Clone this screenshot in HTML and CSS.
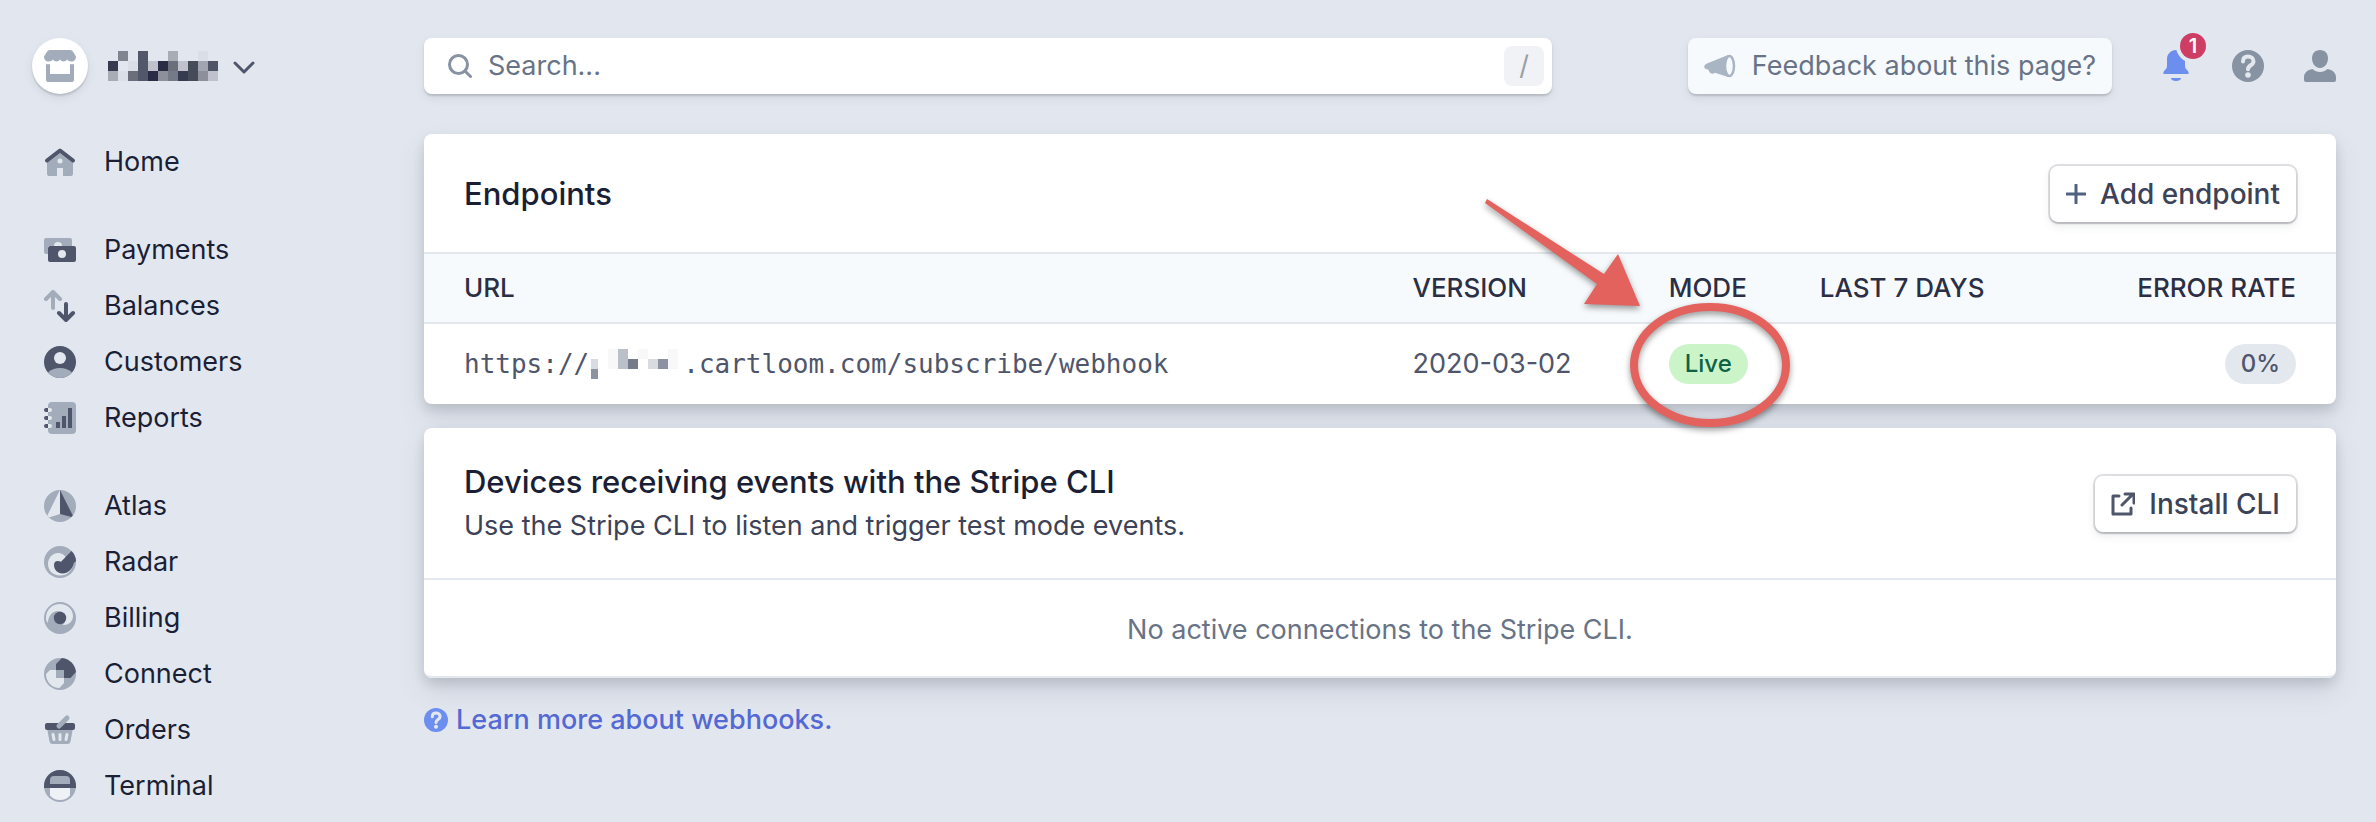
FILE: index.html
```html
<!DOCTYPE html>
<html lang="en">
<head>
    <meta charset="UTF-8">
    <meta name="viewport" content="width=device-width, initial-scale=1.0">
    <title>Webhooks - Dashboard</title>
    <link rel="stylesheet" href="styles.css">
</head>
<body>
    <aside class="sidebar">
        <button type="button" class="account" aria-label="Switch account">
            <span class="account-logo">
                <svg width="32" height="32" viewBox="0 0 32 32" fill="#a3acba">
                    <path d="M6 0h20c1.500 0 2.500.8 3.200 2L32 6.500c0 3-2 5-4.500 5-2.200 0-3.500-.8-4.300-2-1 1.200-2.200 2-3.700 2-1.500 0-2.700-.8-3.500-2-.8 1.200-2 2-3.500 2-1.500 0-2.700-.8-3.700-2-.8 1.200-2.100 2-4.300 2-2.500 0-4.500-2-4.500-5L2.800 2C3.500.8 4.500 0 6 0z"/>
                    <path d="M2 14c1.500.4 3 .3 4 0v10h20V14c1.300.4 2.700.4 4 0v16a2 2 0 0 1-2 2H4a2 2 0 0 1-2-2z"/>
                </svg>
            </span>
            <svg class="account-name" width="110" height="30" viewBox="0 0 11 3" shape-rendering="crispEdges">
                <path fill="#808590" d="M1 0h1v1H1z"/>
                <path fill="#52586a" d="M3 0h1v3H3z"/>
                <path fill="#a8acb5" d="M6 0h1v1H6zM0 2h1v1H0z"/>
                <path fill="#dadee6" d="M9 0h1v1H9zM2 1h1v1H2zM1 2h1v1H1z"/>
                <path fill="#373b50" d="M0 1h1v1H0zM7 2h1v1H7z"/>
                <path fill="#bfc2cd" d="M4 1h1v1H4zM7 1h1v1H7zM10 2h1v1h-1z"/>
                <path fill="#2a2c45" d="M5 1h1v1H5zM4 2h1v1H4z"/>
                <path fill="#6b6f7c" d="M6 1h1v1H6zM2 2h1v1H2z"/>
                <path fill="#464b5a" d="M8 1h1v1H8zM8 2h1v1H8z"/>
                <path fill="#a1a5b1" d="M9 1h1v1H9z"/>
                <path fill="#50556a" d="M10 1h1v1h-1z"/>
                <path fill="#8d909a" d="M5 2h1v1H5zM9 2h1v1H9z"/>
                <path fill="#757a88" d="M6 2h1v1H6z"/>
            </svg>
            <svg width="24" height="16" viewBox="0 0 24 16" fill="none" stroke="#4f566b" stroke-width="3" stroke-linecap="round" stroke-linejoin="round">
                <path d="M3 5l9 9 9-9"/>
            </svg>
        </button>

        <nav class="nav">
            <ul class="nav-group">
                <li><a href="#" class="nav-link">
                    <svg class="nav-icon" viewBox="0 0 32 32">
                        <path fill="#a3acba" fill-rule="evenodd" d="M3 14L16 4l13 10v14a2 2 0 0 1-2 2h-8v-8h-6v8H5a2 2 0 0 1-2-2zM16 12.500a2.500 2.500 0 1 0 0 5 2.500 2.500 0 0 0 0-5z"/>
                        <path fill="none" stroke="#4f566b" stroke-width="4" stroke-linecap="round" stroke-linejoin="round" d="M3 14.500L16 4.500l13 10"/>
                    </svg>
                    Home
                </a></li>
            </ul>
            <ul class="nav-group">
                <li><a href="#" class="nav-link">
                    <svg class="nav-icon" viewBox="0 0 32 32">
                        <path fill="#a3acba" d="M2 4h24a2 2 0 0 1 2 2v6H4v8H2a2 2 0 0 1-2-2V6a2 2 0 0 1 2-2z"/>
                        <circle cx="14" cy="12" r="4" fill="#e3e8ee"/>
                        <path fill="#4f566b" fill-rule="evenodd" d="M6 12h24a2 2 0 0 1 2 2v12a2 2 0 0 1-2 2H6a2 2 0 0 1-2-2V14a2 2 0 0 1 2-2zM18 16a4 4 0 1 0 0 8 4 4 0 0 0 0-8z"/>
                    </svg>
                    Payments
                </a></li>
                <li><a href="#" class="nav-link">
                    <svg class="nav-icon" viewBox="0 0 32 32" fill="none" stroke-width="4" stroke-linecap="round" stroke-linejoin="round">
                        <path stroke="#a3acba" d="M9 18V3M2 9l7-7 7 7"/>
                        <path stroke="#4f566b" d="M22 14v15M15 23l7 7 7-7"/>
                    </svg>
                    Balances
                </a></li>
                <li><a href="#" class="nav-link">
                    <svg class="nav-icon" viewBox="0 0 32 32">
                        <circle cx="16" cy="16" r="16" fill="#4f566b"/>
                        <circle cx="16" cy="12" r="6" fill="#e3e8ee"/>
                        <path fill="#a3acba" d="M4 26.500C7 23.500 11 22 16 22s9 1.500 12 4.500C25 30 21 32 16 32S7 30 4 26.500z"/>
                    </svg>
                    Customers
                </a></li>
                <li><a href="#" class="nav-link">
                    <svg class="nav-icon" viewBox="0 0 32 32">
                        <rect x="4" width="28" height="32" rx="4" fill="#a3acba"/>
                        <path fill="none" stroke="#e3e8ee" stroke-width="4" stroke-linecap="round" d="M4 8h2M4 16h2M4 24h2"/>
                        <path fill="#4f566b" d="M4 6v4H2a2 2 0 0 1 0-4zM4 14v4H2a2 2 0 0 1 0-4zM4 22v4H2a2 2 0 0 1 0-4zM12 20h4v6h-4zM18 14h4v12h-4zM24 6h4v20h-4z"/>
                    </svg>
                    Reports
                </a></li>
            </ul>
            <ul class="nav-group">
                <li><a href="#" class="nav-link">
                    <svg class="nav-icon" viewBox="0 0 32 32">
                        <circle cx="16" cy="16" r="16" fill="#a3acba"/>
                        <path fill="#e3e8ee" d="M16 0v24L5 27.500 3.300 25.500z"/>
                        <path fill="#4f566b" d="M16 0l12.800 25.500-1.300 1.500L16 24z"/>
                    </svg>
                    Atlas
                </a></li>
                <li><a href="#" class="nav-link">
                    <svg class="nav-icon" viewBox="0 0 32 32">
                        <circle cx="16" cy="16" r="16" fill="#a3acba"/>
                        <path fill="#e3e8ee" d="M21 10C19 8 17 7 14 7 8.500 7 4 12 4 18c0 6.500 5 11.500 12 11.500 7 0 12-4.500 14-12.500l-8-2z"/>
                        <path fill="#4f566b" d="M27.500 5C30.500 8 32 11.500 32 15.500c-1 .2-1.600.5-2 1.500-1.500 6-6 10.500-11.500 10.500-5 0-8.500-4-8.500-8.500 0-2.500 1.500-4 3.500-4 1.300 0 2.500.5 3.500.8z"/>
                    </svg>
                    Radar
                </a></li>
                <li><a href="#" class="nav-link">
                    <svg class="nav-icon" viewBox="0 0 32 32">
                        <circle cx="16" cy="16" r="16" fill="#a3acba"/>
                        <path fill="#e3e8ee" d="M2 16C2 8 8 2 16 2c7 0 13 5 13 12 0 5-4 9-9 9-3 0 2-2 2-7 0-4-3-7-8-7-6 0-10 5-10 12C2.500 19.500 2 18 2 16z"/>
                        <circle cx="16" cy="16" r="6.200" fill="#4f566b"/>
                    </svg>
                    Billing
                </a></li>
                <li><a href="#" class="nav-link">
                    <svg class="nav-icon" viewBox="0 0 32 32">
                        <circle cx="16" cy="16" r="16" fill="#a3acba"/>
                        <path fill="#4f566b" d="M18 0c8 1 13 6.500 14 14l-5.500 6H12V6z"/>
                        <path fill="#e3e8ee" d="M6 12h14v13l-4.500 5C8 30 2 24 2 16z"/>
                        <path fill="#a3acba" d="M12 12h8v8h-8z"/>
                    </svg>
                    Connect
                </a></li>
                <li><a href="#" class="nav-link">
                    <svg class="nav-icon" viewBox="0 0 32 32">
                        <path fill="#a3acba" d="M3 14h26l-2.500 13.500A3 3 0 0 1 23.500 30h-15a3 3 0 0 1-3-2.500z"/>
                        <path fill="#4f566b" d="M3 9h26a2 2 0 0 1 2 2v3a2 2 0 0 1-2 2H3a2 2 0 0 1-2-2v-3a2 2 0 0 1 2-2z"/>
                        <path fill="none" stroke="#e3e8ee" stroke-width="3" stroke-linecap="round" d="M9 20.500l1 5M16 20.500v5M23 20.500l-1 5"/>
                        <path stroke="#a3acba" stroke-width="5" stroke-linecap="round" d="M15 12l8-8"/>
                    </svg>
                    Orders
                </a></li>
                <li><a href="#" class="nav-link">
                    <svg class="nav-icon" viewBox="0 0 32 32">
                        <circle cx="16" cy="16" r="16" fill="#a3acba"/>
                        <path fill="#4f566b" d="M0 18v-2a16 16 0 0 1 32 0v2z"/>
                        <path fill="#a3acba" d="M6 14v-4a4 4 0 0 1 4-4h12a4 4 0 0 1 4 4v4z"/>
                        <path fill="#eef1f6" d="M6 18h20v7.500C23.500 28.500 20 30 16 30S8.500 28.500 6 25.500z"/>
                    </svg>
                    Terminal
                </a></li>
            </ul>
        </nav>
    </aside>

    <main class="main">
        <header class="topbar">
            <div class="search">
                <svg width="24" height="24" viewBox="0 0 24 24" fill="none" stroke="#8792a2" stroke-width="3" stroke-linecap="round">
                    <circle cx="10.500" cy="10.500" r="9"/>
                    <path d="M17 17l5.500 5.500"/>
                </svg>
                <input type="search" class="search-input" placeholder="Search..." aria-label="Search">
                <kbd class="search-key">/</kbd>
            </div>
            <button type="button" class="feedback">
                <svg width="32" height="24" viewBox="0 0 32 24">
                    <path fill="#a9b5c3" d="M24 1L3 9.500C-.5 11-.5 14 2 15l2.500.8C5 19 8 21 11 18.800L24 23z"/>
                    <ellipse cx="25.500" cy="12" rx="4.500" ry="10" fill="#f7fafc" stroke="#a9b5c3" stroke-width="2.500"/>
                </svg>
                Feedback about this page?
            </button>
            <div class="actions">
                <button type="button" class="icon-button" aria-label="Notifications">
                    <svg width="32" height="32" viewBox="0 0 32 32" fill="#6c8eef">
                        <path d="M16 0c5 0 9 4 9 9v7c0 2 1 3 2.500 4.500C29 22 29 24 28 24H4c-1 0-1-2 .5-3.500C6 19 7 18 7 16V9c0-5 4-9 9-9z"/>
                        <path d="M11 28h10c0 2-2 3-5 3s-5-1-5-3z"/>
                        <circle cx="33" cy="-4" r="17" fill="#e3e8ee"/>
                    </svg>
                    <span class="count">1</span>
                </button>
                <button type="button" class="icon-button" aria-label="Help">
                    <svg width="32" height="32" viewBox="0 0 32 32">
                        <circle cx="16" cy="16" r="16" fill="#8792a2"/>
                        <path fill="none" stroke="#e3e8ee" stroke-width="4" stroke-linecap="round" d="M11 11.500C11 8 13 6.500 16 6.500s5.500 1.800 5.500 4.700c0 4.300-5.500 3.800-5.500 8"/>
                        <circle cx="16" cy="25" r="2.800" fill="#e3e8ee"/>
                    </svg>
                </button>
                <button type="button" class="icon-button" aria-label="Profile">
                    <svg width="32" height="32" viewBox="0 0 32 32" fill="#8792a2">
                        <path d="M16 0c5 0 8 3.500 8 8.500S20.500 18 16 18 8 13.500 8 8.500 11 0 16 0z"/>
                        <path d="M8.500 19c4 4 11 4 15 0 5 .8 8.500 4 8.500 8v3a2 2 0 0 1-2 2H2a2 2 0 0 1-2-2v-3c0-4 3.500-7.200 8.500-8z"/>
                    </svg>
                </button>
            </div>
        </header>

        <section class="card">
            <div class="card-header">
                <h2 class="card-title">Endpoints</h2>
                <button type="button" class="button">
                    <svg width="20" height="20" viewBox="0 0 20 20" fill="none" stroke="#4f6080" stroke-width="3" stroke-linecap="round">
                        <path d="M10 1v18M1 10h18"/>
                    </svg>
                    Add endpoint
                </button>
            </div>
            <table class="table">
                <thead>
                    <tr>
                        <th class="col-url">URL</th>
                        <th class="col-version">VERSION</th>
                        <th class="col-mode">MODE</th>
                        <th>LAST 7 DAYS</th>
                        <th class="col-rate">ERROR RATE</th>
                    </tr>
                </thead>
                <tbody>
                    <tr>
                        <td>
                            <span class="url">https://<svg class="url-hidden" width="94" height="30" viewBox="0 0 94 30" shape-rendering="crispEdges">
                                <path fill="#dadbe0" d="M2 10h7v10H2zM59 10h10v10H59z"/>
                                <path fill="#8d92a1" d="M2 20h7v10H2zM69 10h10v10H69z"/>
                                <path fill="#f8f8f9" d="M19 0h10v20H19zM49 0h10v10H49zM79 0h10v20H79z"/>
                                <path fill="#bbbfc7" d="M29 0h10v20H29z"/>
                                <path fill="#757b8b" d="M39 10h10v10H39z"/>
                            </svg>.cartloom.com/subscribe/webhook</span>
                        </td>
                        <td>2020-03-02</td>
                        <td>
                            <span class="mode">
                                <span class="badge badge-live">Live</span>
                                <!-- arrow and ring around the live badge -->
                                <svg class="callout" width="330" height="250" viewBox="0 0 330 250">
                                    <path fill="#e3625d" d="M8 9l117 75 14-20 22 52-56-2 13-20L6 13z"/>
                                    <ellipse cx="231" cy="175" rx="76" ry="58" fill="none" stroke="#e3625d" stroke-width="8"/>
                                </svg>
                            </span>
                        </td>
                        <td></td>
                        <td class="col-rate"><span class="badge">0%</span></td>
                    </tr>
                </tbody>
            </table>
        </section>

        <section class="card">
            <div class="card-header card-header-tall">
                <div>
                    <h2 class="card-title">Devices receiving events with the Stripe CLI</h2>
                    <p class="card-text">Use the Stripe CLI to listen and trigger test mode events.</p>
                </div>
                <button type="button" class="button">
                    <svg width="24" height="24" viewBox="0 0 24 24" fill="none" stroke="#4f566b" stroke-width="3" stroke-linecap="round" stroke-linejoin="round">
                        <path d="M8 4H2v18h18v-6"/>
                        <path d="M14 2h9v9M22 2L11 13"/>
                    </svg>
                    Install CLI
                </button>
            </div>
            <p class="empty">No active connections to the Stripe CLI.</p>
        </section>

        <a href="#" class="learn-more">
            <svg width="24" height="24" viewBox="0 0 32 32">
                <circle cx="16" cy="16" r="16" fill="#6c8eef"/>
                <path fill="none" stroke="#e3e8ee" stroke-width="4" stroke-linecap="round" d="M11 11.500C11 8 13 6.500 16 6.500s5.500 1.800 5.500 4.700c0 4.300-5.500 3.800-5.500 8"/>
                <circle cx="16" cy="25" r="2.800" fill="#e3e8ee"/>
            </svg>
            Learn more about webhooks.
        </a>
    </main>
</body>
</html>
```

FILE: styles.css
```css
* {
    box-sizing: border-box;
}

body {
    margin: 0;
    min-height: 100vh;
    background: #e2e7ef;
    font-family: Inter, "Liberation Sans", sans-serif;
    font-size: 27px;
    line-height: 36px;
    color: #1a1f36;
    display: flex;
}

svg {
    flex: none;
    display: block;
}

h2,
p,
ul {
    margin: 0;
    padding: 0;
}

button {
    border: none;
    background: none;
    padding: 0;
    font: inherit;
    cursor: pointer;
}

/* Sidebar */

.sidebar {
    flex: none;
    width: 424px;
    padding: 38px 32px 0;
}

.account {
    display: flex;
    align-items: center;
    height: 56px;
    margin-bottom: 40px;
}

.account-logo {
    width: 56px;
    height: 56px;
    border-radius: 50%;
    background: #fff;
    box-shadow: 0 2px 2px rgba(0, 0, 0, 0.14), 0 4px 10px rgba(60, 66, 87, 0.1);
    display: flex;
    align-items: center;
    justify-content: center;
}

.account-name {
    margin: 0 14px 0 20px;
}

.nav {
    display: flex;
    flex-direction: column;
    gap: 32px;
}

.nav-group {
    list-style: none;
}

.nav-link {
    display: flex;
    align-items: center;
    gap: 28px;
    height: 56px;
    padding-left: 12px;
    color: #1a1f36;
    text-decoration: none;
}

.nav-icon {
    width: 32px;
    height: 32px;
}

/* Top bar */

.main {
    flex: 1;
    min-width: 0;
    padding: 38px 40px 38px 0;
}

.topbar {
    display: flex;
    align-items: center;
    margin-bottom: 40px;
}

.search,
.feedback {
    display: flex;
    align-items: center;
    gap: 16px;
    height: 56px;
    border-radius: 8px;
    box-shadow: 0 2px 2px rgba(0, 0, 0, 0.14), 0 4px 10px rgba(60, 66, 87, 0.1);
}

.search {
    flex: 1;
    max-width: 1128px;
    padding: 0 8px 0 24px;
    background: #fff;
}

.search-input {
    flex: 1;
    min-width: 0;
    padding: 0;
    border: none;
    outline: none;
    background: none;
    font: inherit;
    color: #1a1f36;
}

.search-input::placeholder {
    color: #697386;
    opacity: 1;
}

.search-key {
    width: 40px;
    height: 40px;
    border-radius: 8px;
    background: #f1f2f6;
    color: #9a9da6;
    font-family: inherit;
    font-size: 27px;
    line-height: 40px;
    text-align: center;
}

.feedback {
    margin-left: auto;
    padding: 0 16px;
    background: #f7fafc;
    color: #697386;
}

.actions {
    display: flex;
    gap: 40px;
    margin-left: 48px;
}

.icon-button {
    position: relative;
}

.count {
    position: absolute;
    top: -17px;
    right: -14px;
    width: 26px;
    height: 26px;
    border-radius: 50%;
    background: #cd3d64;
    color: #fff;
    font-size: 20px;
    font-weight: 600;
    line-height: 26px;
    text-align: center;
}

/* Cards */

.card {
    margin-bottom: 24px;
    border-radius: 8px;
    background: #fff;
    box-shadow: 0 14px 28px rgba(60, 66, 87, 0.12), 0 6px 12px rgba(0, 0, 0, 0.12);
}

.card-header {
    display: flex;
    align-items: center;
    justify-content: space-between;
    min-height: 120px;
    padding: 2px 40px 0;
    border-bottom: 2px solid #e3e8ee;
}

.card-header-tall {
    min-height: 152px;
}

.card-title {
    font-size: 31px;
    font-weight: 500;
    line-height: 40px;
}

.card-text {
    margin-top: 4px;
    line-height: 40px;
    color: #3c4257;
}

.button {
    display: flex;
    align-items: center;
    gap: 14px;
    height: 56px;
    padding: 0 16px;
    border-radius: 8px;
    background: #fff;
    box-shadow: 0 0 0 2px rgba(60, 66, 87, 0.16), 0 2px 2px rgba(0, 0, 0, 0.14), 0 4px 10px rgba(60, 66, 87, 0.1);
    color: #3c4257;
    font-size: 28px;
    font-weight: 500;
}

.table {
    width: 100%;
    border-spacing: 0;
    table-layout: fixed;
}

.table th {
    height: 70px;
    padding: 0;
    background: #f7fafc;
    border-bottom: 2px solid #e3e8ee;
    color: #2a2f45;
    font-size: 26px;
    font-weight: 500;
    text-align: left;
}

.table td {
    height: 80px;
    padding: 0;
    color: #4f566b;
}

.table th:first-child,
.table td:first-child {
    padding-left: 40px;
}

.table .col-rate {
    padding-right: 40px;
    text-align: right;
}

.col-url {
    width: 51.7%;
}

.col-version {
    width: 13.4%;
}

.col-mode {
    width: 7.9%;
}

.url {
    display: flex;
    align-items: center;
    font-family: "DejaVu Sans Mono", monospace;
    font-size: 26px;
}

.badge {
    display: inline-block;
    padding: 0 16px;
    border-radius: 20px;
    background: #e3e8ee;
    color: #4f566b;
    font-size: 24px;
    font-weight: 500;
    line-height: 40px;
    vertical-align: middle;
}

.badge-live {
    background: #cbf4c9;
    color: #0e6245;
}

.mode {
    position: relative;
    display: inline-block;
    vertical-align: middle;
}

.callout {
    position: absolute;
    top: -154px;
    left: -190px;
    z-index: 1;
    filter: drop-shadow(0 3px 3px rgba(0, 0, 0, 0.4));
    pointer-events: none;
}

.empty {
    padding: 32px 40px 28px;
    border-bottom: 2px solid #e3e8ee;
    border-radius: 0 0 8px 8px;
    color: #697386;
    text-align: center;
}

.learn-more {
    display: inline-flex;
    align-items: center;
    gap: 8px;
    color: #5469d4;
    font-size: 27px;
    font-weight: 500;
    text-decoration: none;
}
```
